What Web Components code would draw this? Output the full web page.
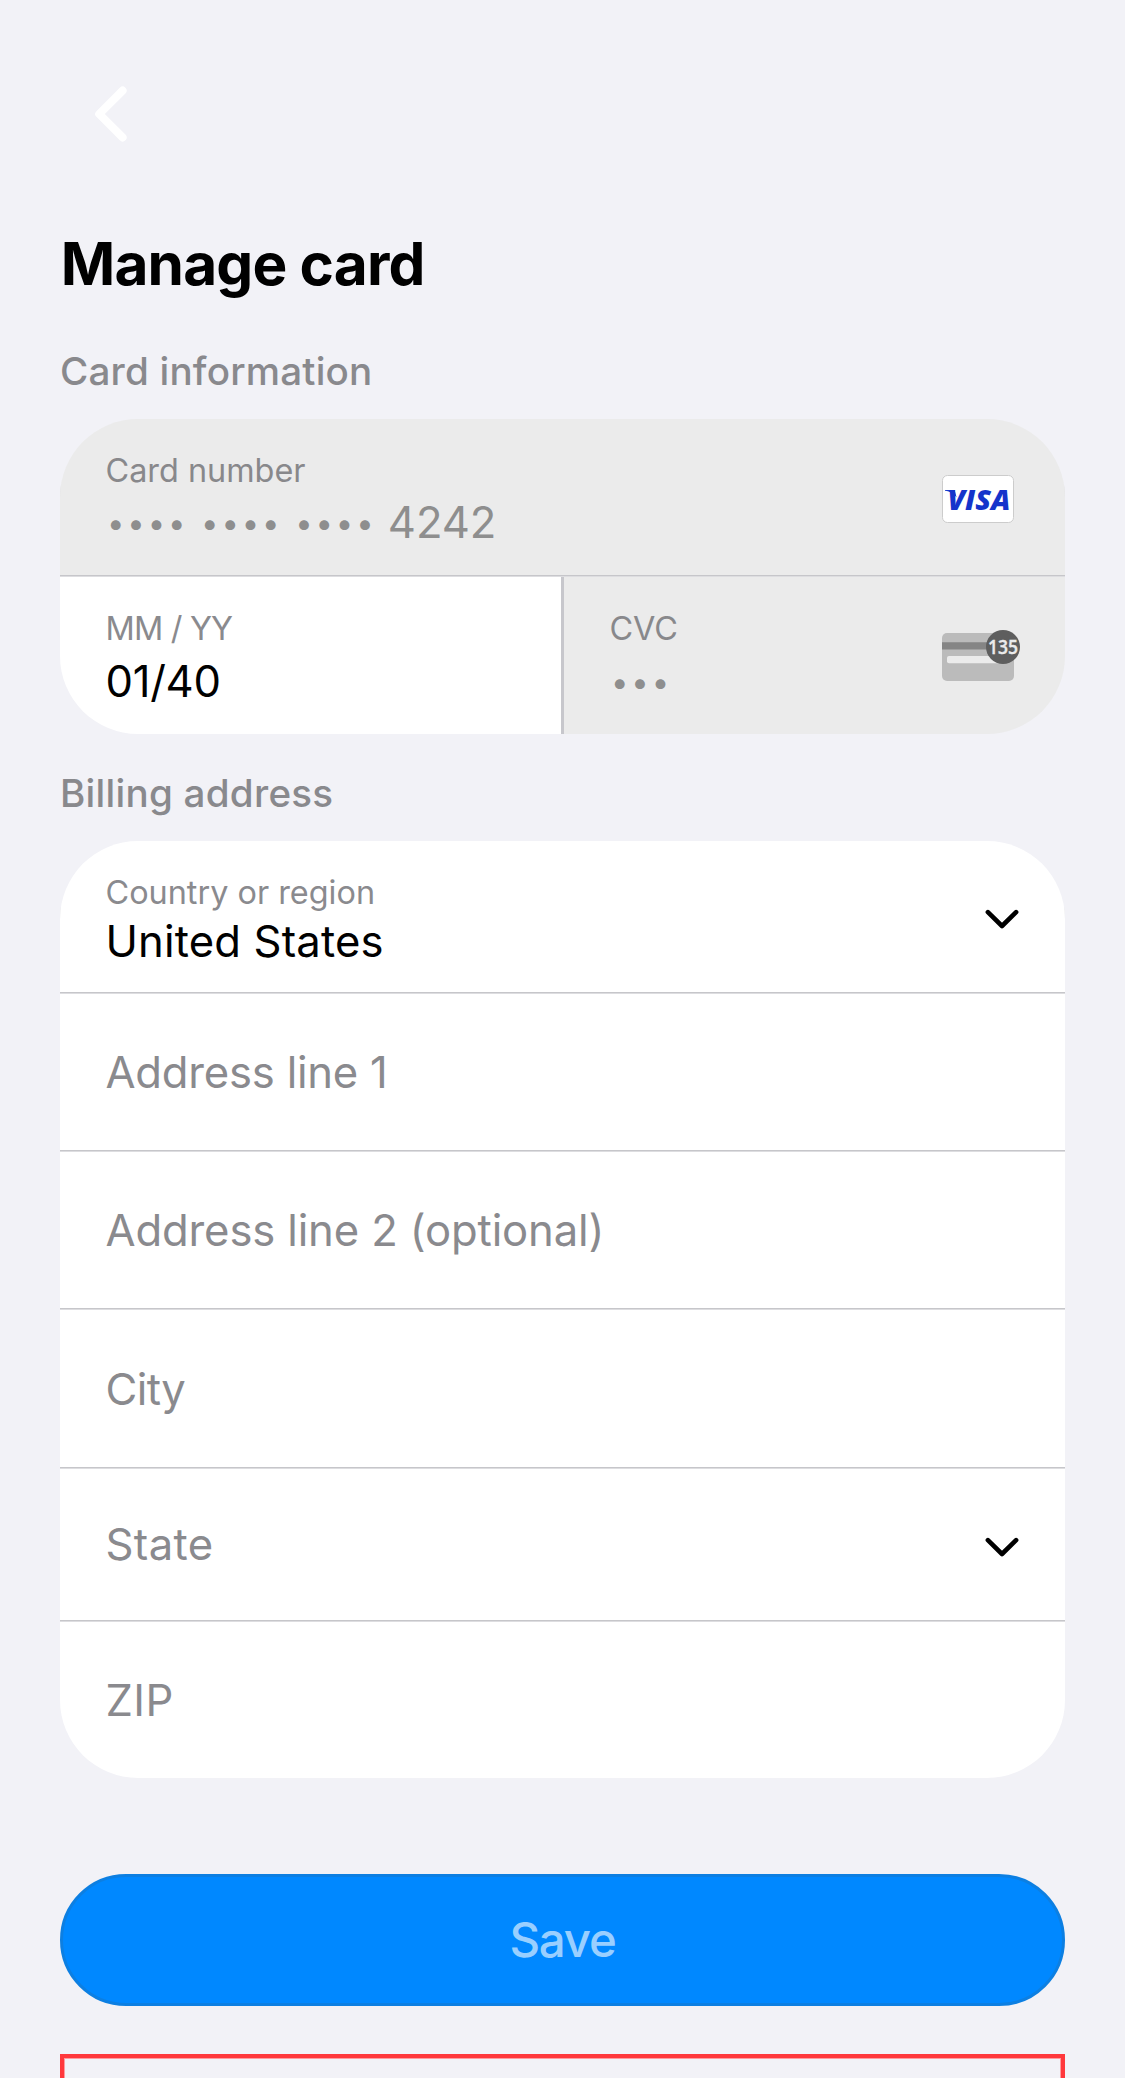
<!DOCTYPE html>
<html lang="en">
<head>
<meta charset="utf-8">
<title>Manage card</title>
<style>
html,body{margin:0;height:2078px;overflow:hidden;background:#f2f2f7}
body{font-family:Inter,"Liberation Sans",sans-serif;color:#000}
</style>
</head>
<body>
<manage-card-page>
  <back-button slot="nav"></back-button>
  <span slot="title">Manage card</span>

  <form-section heading="Card information" style="--heading-spacing:.2px">
    <form-field class="disabled" label="Card number" style="--height:156px;--value-gap:6px;--label-spacing:0">
      <masked-digits groups="4 4 4">4242</masked-digits>
      <visa-badge slot="icon"></visa-badge>
    </form-field>
    <field-row>
      <form-field label="MM / YY" style="--height:157px;--value-gap:7px;--label-spacing:-.8px;--value-spacing:-.3px">01/40</form-field>
      <form-field class="disabled" label="CVC" style="--height:157px;--value-gap:7px;--label-spacing:-.1px;--inset:45.5px">
        <masked-digits groups="3"></masked-digits>
        <cvc-icon slot="icon"></cvc-icon>
      </form-field>
    </field-row>
  </form-section>

  <form-section heading="Billing address" style="--heading-spacing:.25px;margin-top:35px">
    <form-field label="Country or region" style="--height:151px;--value-gap:2.5px;--label-spacing:0;--value-spacing:.156px">United States<chevron-down slot="icon"></chevron-down></form-field>
    <form-field class="empty" style="--height:156px;--value-spacing:-.215px">Address line 1</form-field>
    <form-field class="empty" style="--height:156px;--value-spacing:-.135px">Address line 2 (optional)</form-field>
    <form-field class="empty" style="--height:157px;--value-spacing:-.6px">City</form-field>
    <form-field class="empty" style="--height:151px;--value-spacing:.4px;--nudge:0px">State<chevron-down slot="icon"></chevron-down></form-field>
    <form-field class="empty" style="--height:156px;--value-spacing:.4px">ZIP</form-field>
  </form-section>

  <save-button>Save</save-button>
  <outline-box></outline-box>
</manage-card-page>

<script>
const define = (name, html, setup) => {
  const template = document.createElement('template');
  template.innerHTML = html;
  customElements.define(name, class extends HTMLElement {
    constructor() {
      super();
      this.attachShadow({mode: 'open'}).append(template.content.cloneNode(true));
    }
    connectedCallback() { if (setup) setup(this, this.shadowRoot); }
  });
};

define('manage-card-page', `
<style>
:host{display:flex;flex-direction:column;box-sizing:border-box;width:1125px;height:2078px;padding:0 60px;overflow:hidden}
nav{flex:none;display:flex;align-items:flex-start;box-sizing:border-box;height:228px;padding:86px 0 0 34px}
h1{flex:none;margin:0 0 47px .7px;height:72px;font-size:58.5px;line-height:72px;font-weight:700;letter-spacing:-.8px}
</style>
<nav><slot name="nav"></slot></nav>
<h1><slot name="title"></slot></h1>
<slot></slot>`);

define('back-button', `
<style>:host{display:block;width:34px;height:56px}svg{display:block}</style>
<svg width="34" height="56" viewBox="94 86 34 56" fill="none" stroke="#fff" stroke-width="8" stroke-linecap="round" stroke-linejoin="round"><path d="M122.6 90.6 99.2 114l23.4 23.4"/></svg>`);

define('form-section', `
<style>
:host{display:block;flex:none}
h2{margin:0 0 24px;height:48px;font-size:38.6px;line-height:48px;font-weight:500;color:#89898d;letter-spacing:var(--heading-spacing)}
.card{display:flex;flex-direction:column;border-radius:78px;overflow:hidden}
::slotted(:not(:last-child)){border-bottom:1px solid #c6c6ca;box-shadow:0 1px 0 #dddde0;margin-bottom:1px}
</style>
<h2></h2><div class="card"><slot></slot></div>`,
(el, root) => { root.querySelector('h2').textContent = el.getAttribute('heading'); });

define('field-row', `
<style>:host{display:grid;grid-template-columns:501px 501px;gap:3px;background:linear-gradient(#c7c7cc 0 0) 501px 0/3px 100% no-repeat}</style>
<slot></slot>`);

define('form-field', `
<style>
:host{display:flex;align-items:center;box-sizing:content-box;height:var(--height);background:#fff;color:#000}
:host(.disabled){background:#ebebeb;color:#8e8e8e}
:host(.empty){color:#8a8a8e}
.text{flex:1;align-self:flex-start;padding:32px 0 0 var(--inset,45.5px)}
:host(.empty) .text{align-self:center;padding-top:var(--nudge,2px)}
.label{height:40px;font-size:32.4px;line-height:40px;color:#8a8a8e;letter-spacing:var(--label-spacing)}
:host(.disabled) .label{color:#88888b}
.value{height:52px;margin-top:var(--value-gap,0);font-size:43.6px;line-height:52px;letter-spacing:var(--value-spacing,-.07px);white-space:nowrap}
.label:empty{display:none}
:host(.empty) .value{margin-top:0}
</style>
<div class="text"><div class="label"></div><div class="value"><slot></slot></div></div>
<slot name="icon"></slot>`,
(el, root) => { root.querySelector('.label').textContent = el.getAttribute('label') || ''; });

define('masked-digits', `
<style>
:host{display:inline}
.dots{font-size:31px;line-height:0;letter-spacing:2.9px;word-spacing:1.1px;vertical-align:4px;white-space:pre;margin:0 -1.4px 0 1.5px}
</style><span class="dots"></span><slot></slot>`,
(el, root) => {
  const groups = el.getAttribute('groups').split(' ').map(n => '•'.repeat(+n));
  root.querySelector('.dots').textContent = groups.join(' ') + (el.textContent ? ' ' : '');
});

define('visa-badge', `
<style>:host{display:block;width:72px;height:48px;margin:4px 51px 0 0}svg{display:block}text{font:italic 800 27.3px "Open Sans",sans-serif}</style>
<svg width="72" height="48" viewBox="0 0 72 48">
<rect x=".5" y=".5" width="71" height="47" rx="5" fill="#fff" stroke="#ccc"/>
<path d="M3 15h9.6l2 7.4C11.6 18.6 8.4 16.3 3 15.7Z" fill="#1434cb"/>
<text x="5.4" y="34.5" textLength="63" lengthAdjust="spacingAndGlyphs" fill="#1434cb">VISA</text>
</svg>`);

define('cvc-icon', `
<style>:host{display:block;width:84px;height:51px;margin:0 39px 0 0}svg{display:block;overflow:visible}text{font:600 20px "Open Sans",sans-serif}</style>
<svg width="84" height="51" viewBox="942 630 84 51">
<rect x="942" y="633" width="72" height="48" rx="5" fill="#bbb"/>
<path fill="#858585" d="M942 642.2h60v7.2h-60z"/>
<rect x="947" y="656" width="56" height="7.3" rx="2" fill="#ebebeb"/>
<circle cx="1003" cy="647" r="17" fill="#5e5e5e"/>
<text x="988" y="654.3" textLength="30" lengthAdjust="spacingAndGlyphs" fill="#ebebeb" stroke="#ebebeb" stroke-width=".4">135</text>
</svg>`);

define('chevron-down', `
<style>:host{display:block;width:34px;height:20px;margin:4px 46px 0 0}svg{display:block}</style>
<svg width="34" height="20" viewBox="0 0 34 20" fill="none" stroke="#000" stroke-width="4.6" stroke-linecap="round" stroke-linejoin="round"><path d="M2.9 3.2 17 17 31.1 3.2"/></svg>`);

define('save-button', `
<style>:host{flex:none;display:flex;align-items:center;justify-content:center;box-sizing:border-box;height:132px;margin-top:96px;border:3px solid #0c7fe2;border-radius:66px;background:#08f;color:#99cfff;font-size:47.4px;font-weight:500;letter-spacing:-1.2px;line-height:60px}</style>
<slot></slot>`);

define('outline-box', `
<style>:host{flex:none;display:block;box-sizing:border-box;height:120px;margin-top:48px;border:4px solid #ff383c;box-shadow:inset 0 0 0 1px #ff9b9f}</style>`);
</script>
</body>
</html>
